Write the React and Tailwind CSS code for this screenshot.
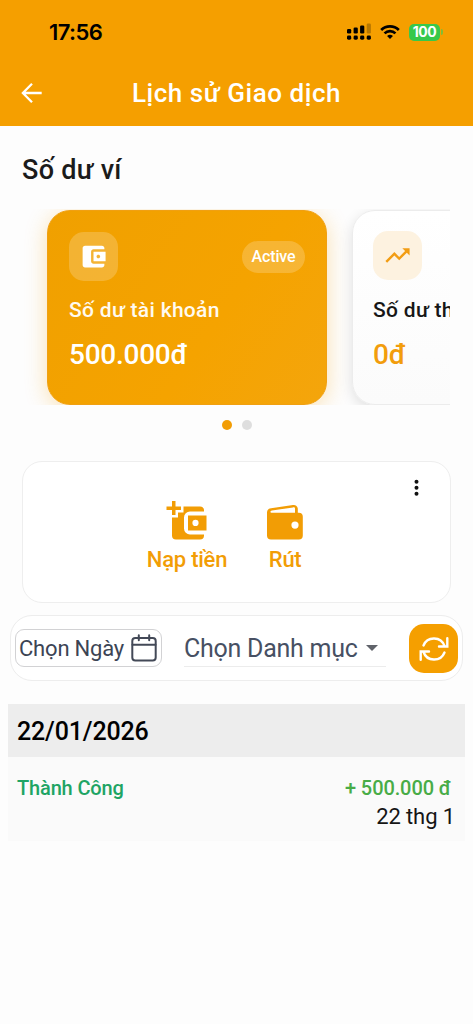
import { useState } from 'react';

const WALLET_PATH = 'M21 18v1c0 1.1-.9 2-2 2H5c-1.11 0-2-.9-2-2V5c0-1.1.89-2 2-2h14c1.1 0 2 .9 2 2v1h-9c-1.11 0-2 .9-2 2v8c0 1.1.89 2 2 2h9zm-9-2h10V8H12v8zm4-2.500c-.83 0-1.500-.67-1.500-1.500s.67-1.500 1.500-1.500 1.500.67 1.500 1.500-.67 1.500-1.500 1.500z';

const TRANSACTIONS = [
  { date: '22/01/2026', items: [{ id: 1, status: 'Thành Công', amount: '+ 500.000 đ', day: '22 thg 1' }] },
];

function TrendIcon() {
  return (
    <svg width="29" height="29" viewBox="0 0 24 24" fill="#f29d14">
      <path d="M16 6l2.290 2.290-4.880 4.880-4-4L2 16.590 3.410 18l6-6 4 4 6.300-6.290L22 12V6z" />
    </svg>
  );
}

// ─── Status bar ───────────────────────────────────────────────────────────────
function StatusBar() {
  return (
    <div className="flex h-[62px] items-center justify-between pt-0.5 pl-[49px] pr-[30px]">
      <span className="font-[Inter] text-[22px] leading-none font-semibold tracking-[-0.6px] text-black">17:56</span>
      <div className="flex items-center">
        <svg width="25" height="18" viewBox="0 0 25 18" fill="#000">
          <rect x="0" y="6" width="4.200" height="4.500" rx="1.300" />
          <rect x="6.600" y="4.500" width="4.200" height="6" rx="1.300" />
          <rect x="13.100" y="2.500" width="4.200" height="8" rx="1.300" />
          <rect x="19.700" y="0.500" width="4.200" height="10" rx="1.300" opacity="0.250" />
          <rect x="0" y="12.500" width="4.200" height="4.200" rx="1.400" />
          <rect x="6.600" y="12.500" width="4.200" height="4.200" rx="1.400" />
          <rect x="13.100" y="12.500" width="4.200" height="4.200" rx="1.400" />
          <rect x="19.700" y="12.500" width="4.200" height="4.200" rx="1.400" />
        </svg>
        <svg className="ml-2" width="20" height="16" viewBox="0 0 22 17" fill="none" stroke="#000" strokeWidth="3">
          <path d="M1.300 6.200a13.800 13.800 0 0 1 19.400 0" />
          <path d="M5 10a8.600 8.600 0 0 1 12 0" />
          <path d="M11 16.200l-3.200-3.300a4.700 4.700 0 0 1 6.400 0z" fill="#000" stroke="none" />
        </svg>
        <span className="ml-[9px] flex h-[17px] w-[31px] items-center justify-center rounded-[5px] bg-[#37c84b] font-[Inter] text-[14px] leading-none font-bold tracking-[-0.4px] text-white">
          100
        </span>
        <span className="ml-px h-1.5 w-0.5 rounded-r bg-[#7fbf35]" />
      </div>
    </div>
  );
}

function Header() {
  return (
    <header className="h-[126px] bg-[#f59f00]">
      <StatusBar />
      <div className="grid h-[62px] grid-cols-[22px_1fr_22px] items-center px-[21px]">
        <svg width="22" height="22" viewBox="0 0 22 22" fill="none" stroke="#fff" strokeWidth="2.300">
          <path d="M20.700 11H2.500M11 1.800L1.900 11l9.100 9.200" />
        </svg>
        <h1 className="text-center text-[26px] leading-none font-medium tracking-[0.55px] text-white">Lịch sử Giao dịch</h1>
      </div>
    </header>
  );
}

// ─── Wallet cards ─────────────────────────────────────────────────────────────
function WalletCarousel() {
  return (
    <div className="flex h-[196px] gap-[25px] overflow-hidden pl-6">
      <div className="mt-px h-[195px] w-[280px] shrink-0 rounded-[23px] border border-[#f0a012] bg-linear-125 from-[#f0a000] via-[#f5a300] via-60% to-[#f4a50c] px-[21px] pt-[21px] shadow-[0_4px_22px_rgba(245,159,0,0.3)]">
        <div className="flex items-center justify-between">
          <div className="flex size-[49px] items-center justify-center rounded-[15px] bg-white/20">
            <svg width="29" height="29" viewBox="0 0 24 24" fill="#fff"><path d={WALLET_PATH} /></svg>
          </div>
          <span className="flex h-8 w-[63px] items-center justify-center rounded-full bg-white/20 text-[16px] leading-none font-medium tracking-[-0.1px] text-white">Active</span>
        </div>
        <p className="mt-[16px] text-[21px] leading-[26px] font-medium tracking-[0.3px] whitespace-nowrap text-[#fffaf0]">Số dư tài khoản</p>
        <p className="mt-[16px] text-[28px] leading-8 font-medium tracking-[-0.25px] text-white">500.000đ</p>
      </div>
      <div className="mt-px h-[195px] w-[280px] shrink-0 rounded-[23px] border border-[#ececec] bg-linear-to-b from-white to-[#fbfbfb] px-5 pt-5 shadow-[0_4px_14px_rgba(0,0,0,0.12)]">
        <div className="flex size-[49px] items-center justify-center rounded-[15px] bg-[#fdf2e0]">
          <TrendIcon />
        </div>
        <p className="mt-[17px] text-[21px] leading-[26px] font-medium tracking-[0.3px] whitespace-nowrap text-[#171717]">Số dư th</p>
        <p className="mt-[16px] text-[28px] leading-8 font-medium tracking-[-0.25px] text-[#f29d0c]">0đ</p>
      </div>
    </div>
  );
}

function Actions() {
  return (
    <section className="relative mx-[22px] mt-[31px] flex h-[142px] justify-center gap-[40px] rounded-[20px] border border-[#eeeeee] bg-white pt-[38px] pr-[23px] text-[#f29d05]">
      <button className="flex flex-col items-center">
        <svg width="42" height="40" viewBox="0 0 42 40" fill="#f29d05">
          <path d="M6 1h3.500v5.500H15V10H9.500v5H6v-5H.500V6.500H6z" />
          <path d="M17.500 6.500H34a4 4 0 0 1 4 4v1H24a6 6 0 0 0-6 6v11a6 6 0 0 0 6 6h14v1a4 4 0 0 1-4 4H10a4 4 0 0 1-4-4V17.500h6v-5h5.500z" />
          <path fillRule="evenodd" d="M22 15.500h18.500v15H22zM29.500 19.800a3.100 3.100 0 1 0 0 6.200 3.100 3.100 0 0 0 0-6.200z" />
        </svg>
        <span className="mt-[7px] text-[22px] leading-[26px] font-medium tracking-[-0.25px] whitespace-nowrap">Nạp tiền</span>
      </button>
      <button className="flex flex-col items-center">
        <svg width="36" height="40" viewBox="0 0 36 40" fill="#f29d05">
          <path fillRule="evenodd" d="M4 8.200L26 5a4 4 0 0 1 4.800 3.500v4.200h1a4 4 0 0 1 4 4v18.800a4 4 0 0 1-4 4H4a4 4 0 0 1-4-4V13a4.600 4.600 0 0 1 4-4.800zM5 10.500c-1.800.3-2.200 2.200-.500 2.200H28V8.800C28 7.700 27.300 7.200 26 7.400zM28 21.500a3.600 3.600 0 1 0 0 7.200 3.600 3.600 0 0 0 0-7.200z" />
        </svg>
        <span className="mt-[7px] text-[22px] leading-[26px] font-medium tracking-[-0.25px]">Rút</span>
      </button>
      <button className="absolute top-[17px] right-[31px]">
        <svg width="5" height="18" viewBox="0 0 5 18" fill="#111">
          <circle cx="2.500" cy="2.800" r="2" /><circle cx="2.500" cy="8.800" r="2" /><circle cx="2.500" cy="14.800" r="2" />
        </svg>
      </button>
    </section>
  );
}

// ─── Filters ──────────────────────────────────────────────────────────────────
function FilterBar({ onRefresh }) {
  return (
    <section className="mt-[12px] mr-[10px] ml-[10px] flex h-[66px] items-center rounded-[22px] border border-[#ededed] bg-white pr-[4px] pl-1">
      <button className="flex h-[38px] w-[147px] items-center justify-between rounded-[9px] border border-[#d2d2d4] pr-[4px] pl-[3px] text-[22px] text-[#3c4454]">
        <span className="tracking-[-0.2px] whitespace-nowrap">Chọn Ngày</span>
        <svg width="26" height="28" viewBox="0 0 26 28" fill="none" stroke="#434957" strokeWidth="2" strokeLinecap="round">
          <rect x="1.300" y="4" width="23.400" height="22.500" rx="3" />
          <path d="M1.500 10.800h23M7.800 1.200v5M18.200 1.200v5" />
        </svg>
      </button>
      <button className="ml-[22px] flex h-[38px] w-[202px] items-center justify-between border-b border-[#ececec] pr-[8px] text-[25px] text-[#475063]">
        <span className="pt-0.5 tracking-[-0.25px] whitespace-nowrap">Chọn Danh mục</span>
        <svg width="12" height="6" viewBox="0 0 12 6" fill="#60636a"><path d="M0 0h12L6 6z" /></svg>
      </button>
      <button onClick={onRefresh} className="ml-auto flex size-[49px] items-center justify-center rounded-[15px] bg-[#f59f00]">
        <svg className="mt-0.5" width="30" height="26" viewBox="0 0 30 26" fill="none" stroke="#fff" strokeWidth="2.400" strokeLinecap="round" strokeLinejoin="miter">
          <path d="M4.500 9.500A11.200 11.200 0 0 1 25.500 10M28.300 2.300v8.200h-8.300" />
          <path d="M25.500 16.500A11.200 11.200 0 0 1 4.500 16M1.700 23.700v-8.200h8.300" />
        </svg>
      </button>
    </section>
  );
}

function TransactionList({ groups }) {
  return groups.map(g => (
    <section key={g.date} className="mt-[23px] mr-2 ml-2">
      <h3 className="flex h-[53px] items-center bg-[#ededed] pt-0.5 pl-[9px] text-[25px] font-medium tracking-[-0.15px] text-black">{g.date}</h3>
      {g.items.map(t => (
        <div key={t.id} className="flex h-[84px] justify-between bg-[#fafafa] pt-[17px] pl-[9px]">
          <span className="text-[20px] leading-7 font-medium tracking-[-0.15px] text-[#20a464]">{t.status}</span>
          <div className="flex flex-col items-end pr-[11px]">
            <span className="mr-[3px] text-[20px] leading-7 font-medium tracking-[-0.1px] text-[#48ac47]">{t.amount}</span>
            <span className="-mr-px text-[22px] leading-[30px] tracking-[-0.1px] text-[#151515]">{t.day}</span>
          </div>
        </div>
      ))}
    </section>
  ));
}

export default function App() {
  const [groups, setGroups] = useState(TRANSACTIONS);

  return (
    <div className="h-[1024px] w-[473px] overflow-hidden bg-[#fdfdfd] font-[Roboto,sans-serif]">
      <Header />
      <section className="mr-[23px] ml-[22px] pt-[28px]">
        <h2 className="text-[27px] leading-8 font-medium tracking-[0.3px] text-[#1b1b1b]">Số dư ví</h2>
        <div className="mt-[23px] pl-px">
          <WalletCarousel />
        </div>
        <div className="mt-[15px] flex justify-center gap-2.5 pl-px">
          <span className="size-2.5 rounded-full bg-[#f29d05]" />
          <span className="size-2.5 rounded-full bg-[#dedede]" />
        </div>
      </section>
      <Actions />
      <FilterBar onRefresh={() => setGroups([...TRANSACTIONS])} />
      <TransactionList groups={groups} />
    </div>
  );
}
